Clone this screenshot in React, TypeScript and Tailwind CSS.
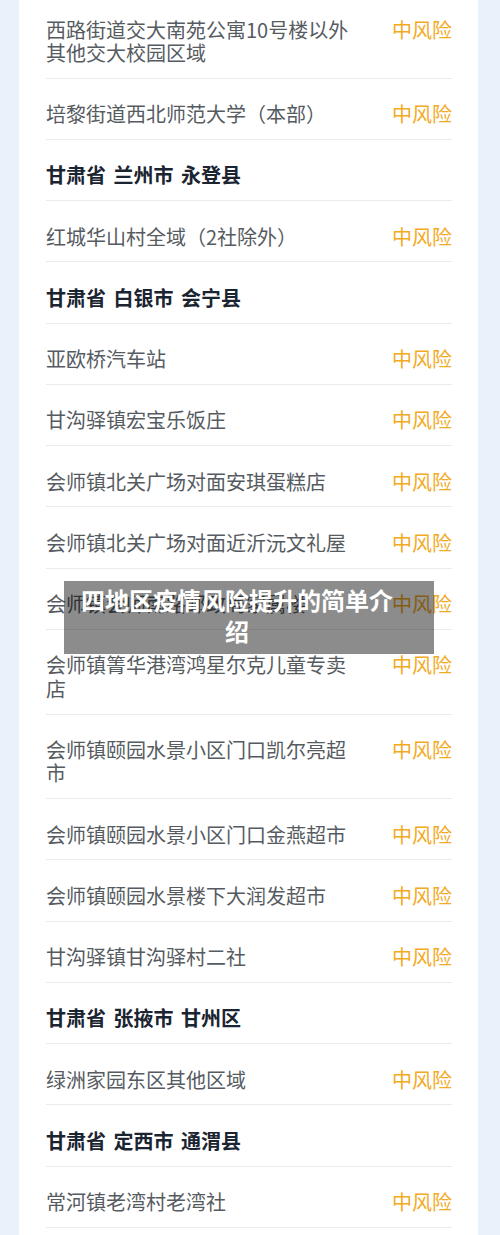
type Row = { name: string; risk?: boolean; head?: boolean }

const rows: Row[] = [
  { name: '西路街道交大南苑公寓10号楼以外其他交大校园区域', risk: true },
  { name: '培黎街道西北师范大学（本部）', risk: true },
  { name: '甘肃省 兰州市 永登县', head: true },
  { name: '红城华山村全域（2社除外）', risk: true },
  { name: '甘肃省 白银市 会宁县', head: true },
  { name: '亚欧桥汽车站', risk: true },
  { name: '甘沟驿镇宏宝乐饭庄', risk: true },
  { name: '会师镇北关广场对面安琪蛋糕店', risk: true },
  { name: '会师镇北关广场对面近沂沅文礼屋', risk: true },
  { name: '会师镇会师南路邮政局家属楼', risk: true },
  { name: '会师镇箐华港湾鸿星尔克儿童专卖店', risk: true },
  { name: '会师镇颐园水景小区门口凯尔亮超市', risk: true },
  { name: '会师镇颐园水景小区门口金燕超市', risk: true },
  { name: '会师镇颐园水景楼下大润发超市', risk: true },
  { name: '甘沟驿镇甘沟驿村二社', risk: true },
  { name: '甘肃省 张掖市 甘州区', head: true },
  { name: '绿洲家园东区其他区域', risk: true },
  { name: '甘肃省 定西市 通渭县', head: true },
  { name: '常河镇老湾村老湾社', risk: true },
]

function AreaRow({ row }: { row: Row }) {
  return (
    <div className="flex items-start justify-between border-b border-[#ebebeb] pt-[23.5px] pb-[13.35px] text-[20px] leading-[23.4px]">
      {row.head ? (
        <span className="font-bold text-[#1b2431] [word-spacing:3px]">{row.name}</span>
      ) : (
        <span className="w-[310px] text-[#565b61]">{row.name}</span>
      )}
      {row.risk && <span className="shrink-0 text-[#f2aa1f]">中风险</span>}
    </div>
  )
}

export default function App() {
  return (
    <div
      className="h-[1235px] overflow-hidden bg-[#e9f2fb] pl-[19px] pr-[22px]"
      style={{ fontFamily: '"Noto Sans CJK SC", "Noto Sans", sans-serif' }}
    >
      <div className="relative flow-root h-full">
        <div className="-mt-[6px] min-h-[1300px] bg-white pl-[27px] pr-[26px]">
          {rows.map((row, i) => (
            <AreaRow key={i} row={row} />
          ))}
        </div>

        <div className="absolute left-[45px] top-[581px] h-[73px] w-[370px] bg-black/45 pl-[13px] pr-[37px] pt-[3px]">
          <p className="text-center text-[24px] font-bold leading-[31px] text-white">
            四地区疫情风险提升的简单介绍
          </p>
        </div>
      </div>
    </div>
  )
}
